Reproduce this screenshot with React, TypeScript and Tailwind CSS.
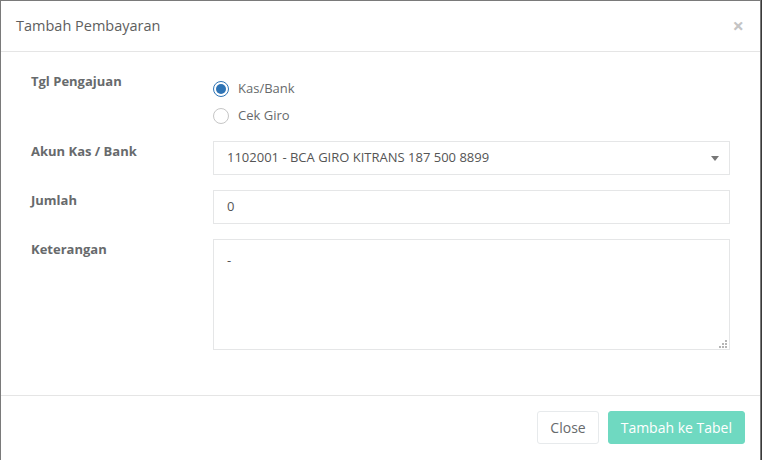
import { useState } from "react";

const font = { fontFamily: '"Open Sans", "Noto Sans", sans-serif' };

const Radio = ({ checked, label, onClick }: { checked: boolean; label: string; onClick: () => void }) => (
  <div className="flex h-[27px] cursor-pointer items-center" onClick={onClick}>
    {checked ? (
      <span className="flex h-[16px] w-[16px] items-center justify-center rounded-full border border-[#2f74b5] bg-white">
        <span className="h-[10px] w-[10px] rounded-full bg-[#2f74b5]" />
      </span>
    ) : (
      <span className="h-[16px] w-[16px] rounded-full border border-[#c6c6c6] bg-white" />
    )}
    <span className="ml-[9px] text-[13px] text-[#676a6c]">{label}</span>
  </div>
);

const App = () => {
  const [mode, setMode] = useState<"kas" | "giro">("kas");

  return (
    <div className="h-[460px] w-[762px] overflow-hidden bg-[#3a3a3a]" style={font}>
      <div className="h-[470px] w-[761px] border border-[#7a7a7a] bg-white">
        {/* header */}
        <div className="flex h-[51px] items-center justify-between border-b border-[#e5e5e5] px-[15px]">
          <h4 className="text-[14.5px] text-[#5e5e5e]">Tambah Pembayaran</h4>
          <button className="mr-[1px] text-[20px] font-bold leading-none text-[#c4c4c4]">×</button>
        </div>

        {/* body */}
        <div className="px-[30px] pb-[45px] pt-[20px]">
          <div className="flex">
            <label className="w-[182px] text-[13px] font-bold leading-[18px] text-[#676a6c]">Tgl Pengajuan</label>
            <div className="pt-[3px]">
              <Radio checked={mode === "kas"} label="Kas/Bank" onClick={() => setMode("kas")} />
              <Radio checked={mode === "giro"} label="Cek Giro" onClick={() => setMode("giro")} />
            </div>
          </div>

          <div className="mt-[12px] flex">
            <label className="w-[182px] pt-[1px] text-[13px] font-bold leading-[18px] text-[#676a6c]">Akun Kas / Bank</label>
            <div className="flex h-[34px] w-[517px] items-center justify-between border border-[#e5e6e7] pl-[13px] pr-[10px]">
              <span className="text-[13px] text-[#555]">1102001 - BCA GIRO KITRANS 187 500 8899</span>
              <span className="h-0 w-0 border-x-[4px] border-t-[5px] border-x-transparent border-t-[#777]" />
            </div>
          </div>

          <div className="mt-[15px] flex">
            <label className="w-[182px] pt-[1px] text-[13px] font-bold leading-[18px] text-[#676a6c]">Jumlah</label>
            <div className="flex h-[34px] w-[517px] items-center border border-[#e5e6e7] px-[13px]">
              <span className="text-[13px] text-[#555]">0</span>
            </div>
          </div>

          <div className="mt-[15px] flex">
            <label className="w-[182px] pt-[1px] text-[13px] font-bold leading-[18px] text-[#676a6c]">Keterangan</label>
            <div className="relative h-[111px] w-[517px] border border-[#e5e6e7] px-[13px] pt-[7px]">
              <span className="text-[13px] text-[#555]">-</span>
              <svg className="absolute bottom-[1px] right-[2px]" width="8" height="8" viewBox="0 0 8 8">
                <rect x="6" y="0" width="2" height="2" fill="#b5b5b5" />
                <rect x="3" y="3" width="2" height="2" fill="#b5b5b5" />
                <rect x="6" y="3" width="2" height="2" fill="#b5b5b5" />
                <rect x="0" y="6" width="2" height="2" fill="#b5b5b5" />
                <rect x="3" y="6" width="2" height="2" fill="#b5b5b5" />
                <rect x="6" y="6" width="2" height="2" fill="#b5b5b5" />
              </svg>
            </div>
          </div>
        </div>

        {/* footer */}
        <div className="flex justify-end gap-[9px] border-t border-[#e5e5e5] px-[15px] pt-[15px]">
          <button className="h-[33px] rounded-[3px] border border-[#e7eaec] bg-white px-[12px] text-[14px] text-[#676a6c]">
            Close
          </button>
          <button className="h-[33px] rounded-[3px] border border-[#6fd9c1] bg-[#6fd9c1] px-[12px] text-[14px] text-white">
            Tambah ke Tabel
          </button>
        </div>
      </div>
    </div>
  );
};

export default App;
